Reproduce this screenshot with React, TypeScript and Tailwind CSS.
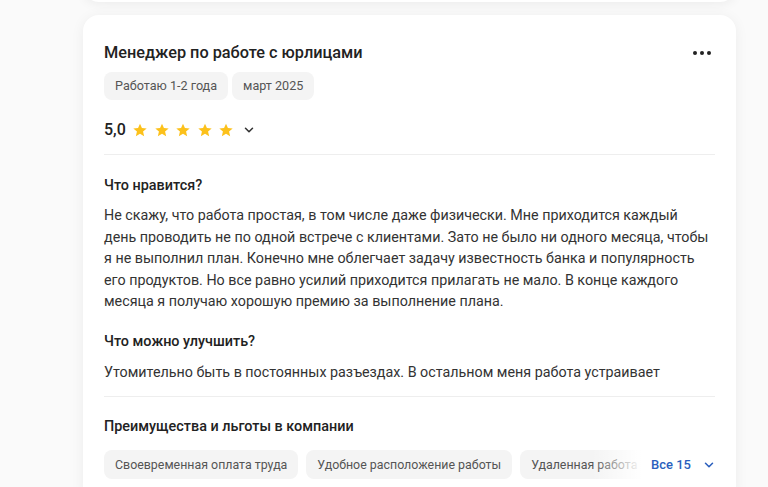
import React from 'react';

const Star: React.FC = () => (
  <svg width="16" height="16" viewBox="0 0 24 24" fill="#fcc11b">
    <path d="M12 2.5l2.9 6.6 7.1.6-5.4 4.7 1.6 7-6.2-3.7-6.2 3.7 1.6-7L2 9.7l7.1-.6z" />
  </svg>
);

const Chevron: React.FC<{ color?: string }> = ({ color = '#333' }) => (
  <svg width="14" height="14" viewBox="0 0 24 24" fill="none" stroke={color} strokeWidth="2.6" strokeLinecap="round" strokeLinejoin="round">
    <path d="M6 9l6 6 6-6" />
  </svg>
);

const tags = ['Работаю 1-2 года', 'март 2025'];
const perks = ['Своевременная оплата труда', 'Удобное расположение работы', 'Удаленная работа'];

const App: React.FC = () => {
  return (
    <div className="min-h-[487px] bg-[#fafafa] overflow-hidden" style={{ fontFamily: 'Roboto, "Noto Sans", sans-serif' }}>
      <div className="ml-[83px] w-[653px] -mt-[40px] h-[42px] rounded-2xl bg-white shadow-[0_2px_12px_rgba(0,0,0,0.06)]" />
      <div className="ml-[83px] mt-[13px] w-[653px] rounded-2xl bg-white px-[21px] pt-[27px] pb-6 shadow-[0_2px_14px_rgba(0,0,0,0.06)]">
        <div className="flex items-center justify-between">
          <h2 className="text-[16.3px] leading-[22px] font-medium text-[#222]">Менеджер по работе с юрлицами</h2>
          <div className="flex gap-[3px] pr-[4px]">
            <span className="h-[4px] w-[4px] rounded-full bg-[#222]" />
            <span className="h-[4px] w-[4px] rounded-full bg-[#222]" />
            <span className="h-[4px] w-[4px] rounded-full bg-[#222]" />
          </div>
        </div>
        <div className="mt-[8px] flex gap-[4px]">
          {tags.map((t) => (
            <span key={t} className="h-[28px] rounded-lg bg-[#f4f4f4] px-[11px] text-[12.6px] leading-[28px] text-[#555]">
              {t}
            </span>
          ))}
        </div>
        <div className="mt-[18px] flex items-center">
          <span className="text-[16px] font-medium text-[#222]">5,0</span>
          <div className="ml-[6.5px] flex gap-[5.5px]">
            {[0, 1, 2, 3, 4].map((i) => (
              <Star key={i} />
            ))}
          </div>
          <span className="ml-[8px] flex">
            <Chevron />
          </span>
        </div>
        <div className="mt-[12px] h-px bg-[#eeeeee]" />

        <h3 className="mt-[21px] text-[14.4px] leading-[20px] font-medium text-[#222]">Что нравится?</h3>
        <p className="mt-[9px] pr-[4px] text-[14.3px] leading-[21.5px] text-[#333]">
          Не скажу, что работа простая, в том числе даже физически. Мне приходится каждый день проводить не по одной встрече с клиентами. Зато не было ни одного месяца, чтобы я не выполнил план. Конечно мне облегчает задачу известность банка и популярность его продуктов. Но все равно усилий приходится прилагать не мало. В конце каждого месяца я получаю хорошую премию за выполнение плана.
        </p>

        <h3 className="mt-[19px] text-[14.4px] leading-[20px] font-medium text-[#222]">Что можно улучшить?</h3>
        <p className="mt-[10px] text-[14.3px] leading-[21.5px] text-[#333]">
          Утомительно быть в постоянных разъездах. В остальном меня работа устраивает
        </p>
        <div className="mt-[13px] h-px bg-[#eeeeee]" />

        <h3 className="mt-[20px] text-[14.4px] leading-[20px] font-medium text-[#222]">Преимущества и льготы в компании</h3>
        <div className="mt-[13px] flex items-center">
          <div className="relative flex w-[538px] shrink-0 gap-[8px] overflow-hidden">
            {perks.map((p) => (
              <span key={p} className="h-[29px] shrink-0 whitespace-nowrap rounded-lg bg-[#f4f4f4] px-[11px] text-[12.4px] leading-[29px] text-[#555]">
                {p}
              </span>
            ))}
            <div className="absolute right-0 top-0 h-full w-[50px] bg-gradient-to-r from-white/0 to-white" />
          </div>
          <span className="ml-[9px] shrink-0 whitespace-nowrap text-[13px] font-medium text-[#2b5fbd]">Все 15</span>
          <span className="ml-[11px] flex">
            <Chevron color="#2b5fbd" />
          </span>
        </div>
      </div>
    </div>
  );
};

export default App;
